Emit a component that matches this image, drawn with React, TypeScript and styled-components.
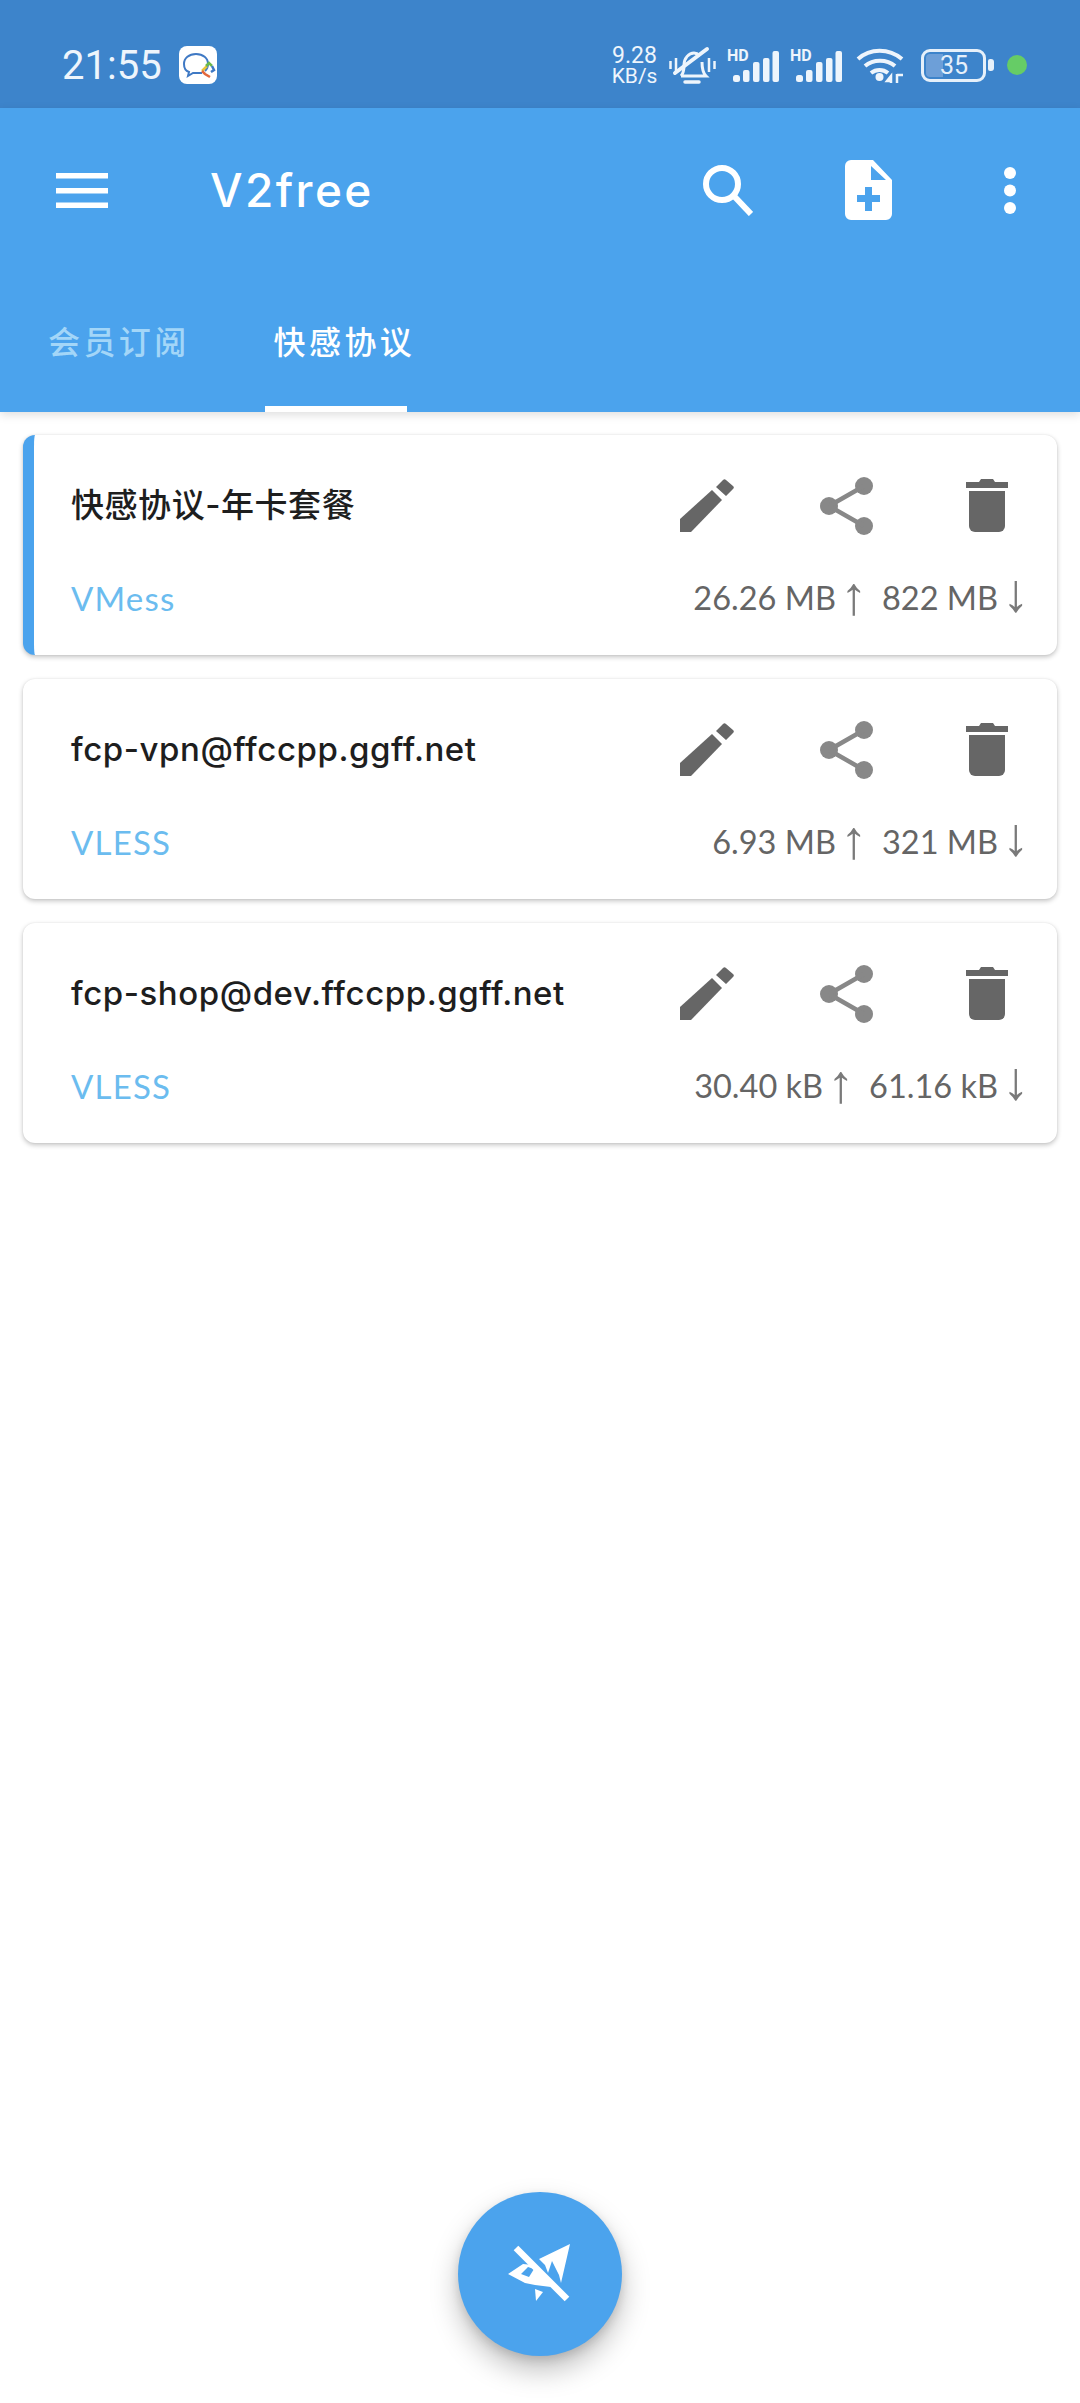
import styled, { createGlobalStyle } from "styled-components";

const GlobalStyle = createGlobalStyle`
  html, body {
    margin: 0;
    padding: 0;
    background: #fff;
  }
  * {
    box-sizing: border-box;
  }
`;

const Page = styled.div`
  position: relative;
  width: 1080px;
  height: 2403px;
  overflow: hidden;
  background: #fff;
  font-family: Lato, "Noto Sans CJK SC", sans-serif;
`;

const StatusBar = styled.div`
  height: 108px;
  background: #3d84cb;
  display: flex;
  align-items: center;
  padding: 22px 53px 0 62px;
  color: #eef5fc;
`;

const Clock = styled.div`
  font-family: Roboto, sans-serif;
  font-size: 40px;
  font-weight: 400;
  width: 117px;
`;

const StatusRight = styled.div`
  margin-left: auto;
  display: flex;
  align-items: center;
`;

const Speed = styled.div`
  font-family: Roboto, sans-serif;
  width: 45px;
  text-align: center;
  white-space: nowrap;
  display: flex;
  flex-direction: column;
  align-items: center;
`;

const SpeedValue = styled.span`
  font-size: 23px;
  line-height: 21px;
`;

const SpeedUnit = styled.span`
  font-size: 21px;
  line-height: 20px;
`;

const BellSlot = styled.div`
  margin-left: 12px;
  display: flex;
`;

const Signal = styled.div`
  position: relative;
  width: 52px;
  height: 34px;
  margin-left: 11px;
  display: flex;
`;

const HdLabel = styled.span`
  position: absolute;
  left: 0;
  top: 0;
  font-family: Roboto, sans-serif;
  font-size: 16px;
  font-weight: 700;
  line-height: 16px;
`;

const WifiSlot = styled.div`
  margin-left: 14px;
  display: flex;
`;

const Battery = styled.div`
  position: relative;
  width: 65px;
  height: 33px;
  margin-left: 17px;
  border: 3px solid #e6f0fa;
  border-radius: 9px;
  padding: 2px;
  display: flex;
`;

const BatteryFill = styled.div`
  width: 17px;
  border-radius: 4px 0 0 4px;
  background: #6d9fd8;
`;

const BatteryText = styled.span`
  position: absolute;
  left: 16px;
  top: -2px;
  font-family: Roboto, sans-serif;
  font-size: 25px;
  line-height: 31px;
  color: #e6f0fa;
`;

const BatteryNub = styled.div`
  width: 6px;
  height: 12px;
  margin-left: 2px;
  border-radius: 2px 3px 3px 2px;
  background: #e6f0fa;
`;

const GreenDot = styled.div`
  width: 20px;
  height: 20px;
  margin-left: 13px;
  border-radius: 50%;
  background: #66cc66;
`;

const AppBar = styled.header`
  position: relative;
  height: 304px;
  background: #4ba3ed;
  box-shadow: 0 3px 9px rgba(0, 0, 0, 0.13);
  display: flex;
  flex-direction: column;
`;

const Toolbar = styled.div`
  height: 164px;
  display: flex;
  align-items: center;
  padding-left: 56px;
`;

const Title = styled.h1`
  margin: 0 0 0 102px;
  font-family: Inter, sans-serif;
  font-size: 46px;
  font-weight: 500;
  line-height: 56px;
  letter-spacing: 2.4px;
  color: #fff;
`;

const ToolbarActions = styled.div`
  margin-left: auto;
  display: flex;
  align-items: center;
`;

const ToolbarSlot = styled.div`
  width: 141px;
  display: flex;
  justify-content: center;
`;

const Tabs = styled.div`
  margin-top: 36px;
  height: 104px;
  display: flex;
  padding-left: 48px;
`;

const Tab = styled.div<{ $active?: boolean }>`
  position: relative;
  font-size: 32px;
  line-height: 40px;
  letter-spacing: 3.4px;
  font-weight: 500;
  padding-top: 14px;
  color: ${(p) => (p.$active ? "#ffffff" : "#a3d6f8")};
  & + & {
    margin-left: 84px;
  }
`;

const TabIndicator = styled.div`
  position: absolute;
  left: -9px;
  bottom: 0;
  width: 142px;
  height: 6px;
  background: #fff;
`;

const List = styled.main`
  padding: 23px 23px 0;
  display: flex;
  flex-direction: column;
  gap: 24px;
`;

const Card = styled.article<{ $selected?: boolean }>`
  height: 220px;
  background: #fff;
  border-radius: 12px;
  overflow: hidden;
  box-shadow: 0 2px 5px rgba(0, 0, 0, 0.24), 0 0 2px rgba(0, 0, 0, 0.07);
  border-left: ${(p) => (p.$selected ? "11px solid #4ba3ed" : "none")};
  padding-left: ${(p) => (p.$selected ? "37px" : "48px")};
  display: flex;
  flex-direction: column;
`;

const CardTop = styled.div`
  height: 142px;
  display: flex;
  align-items: center;
`;

const CardName = styled.div`
  flex: 1;
  margin-bottom: 2px;
  font-family: Inter, "Noto Sans CJK SC", sans-serif;
  font-size: 33px;
  line-height: 42px;
  font-weight: 500;
  letter-spacing: 0.55px;
  color: #1e1e1e;
  white-space: nowrap;
`;

const IconButton = styled.div`
  width: 140px;
  height: 70px;
  flex: none;
  display: flex;
  align-items: center;
  justify-content: center;
`;

const CardBottom = styled.div`
  display: flex;
  align-items: center;
  justify-content: space-between;
  padding-right: 34px;
  margin-top: -1px;
`;

const Protocol = styled.div`
  font-size: 33px;
  line-height: 44px;
  letter-spacing: 1.2px;
  color: #6bbcef;
`;

const Traffic = styled.div`
  display: flex;
  align-items: center;
  font-size: 32.5px;
  line-height: 44px;
  color: #656565;
  white-space: nowrap;
`;

const TrafficArrow = styled.span<{ $last?: boolean }>`
  width: 14px;
  height: 44px;
  margin-left: 11px;
  margin-right: ${(p) => (p.$last ? "0" : "21px")};
  margin-top: ${(p) => (p.$last ? "-12px" : "-6px")};
  display: flex;
  justify-content: center;
  font-family: "Liberation Sans", sans-serif;
  font-size: 54px;
  line-height: 44px;
  color: #7a7a7a;
`;

const Fab = styled.button`
  position: absolute;
  left: 458px;
  top: 2192px;
  width: 164px;
  height: 164px;
  padding: 0;
  border: none;
  border-radius: 50%;
  background: #4ba3ed;
  box-shadow: 0 14px 28px rgba(0, 0, 0, 0.25), 0 4px 10px rgba(0, 0, 0, 0.12);
  display: flex;
  align-items: center;
  justify-content: center;
`;

function MessageIcon() {
  return (
    <svg width="38" height="38" viewBox="0 0 38 38">
      <rect width="38" height="38" rx="8" fill="#fff" />
      <path
        d="M26 25c2-2 3-4 3-7 0-6-5-10-12-10S5 12 5 18c0 4 2 7 5 8l-1 4 5-3h9"
        fill="none"
        stroke="#3f79c4"
        strokeWidth="2"
      />
      <path d="M23 25l5-5" fill="none" stroke="#e9c53b" strokeWidth="2.500" />
      <path d="M27 20l3-3 3 3" fill="none" stroke="#6cb94b" strokeWidth="2.500" />
      <path d="M33 20l2 4-3 2" fill="none" stroke="#3f79c4" strokeWidth="2.500" />
      <path d="M31 31l-5-3-3-3" fill="none" stroke="#e2673c" strokeWidth="2.500" />
    </svg>
  );
}

function MutedBellIcon() {
  return (
    <svg width="47" height="38" viewBox="0 0 47 38" fill="none" stroke="#eef5fc">
      <path d="M12 30c3-3 3-7 3-11 0-7 5-12 10-12 2 0 4 1 6 3" strokeWidth="3" />
      <path d="M33 16c0 6 1 11 4 14H12" strokeWidth="3" />
      <path d="M16 36h14" strokeWidth="3.500" strokeLinecap="round" />
      <path d="M6 27L38 3" strokeWidth="4" strokeLinecap="round" />
      <path d="M1.500 15v8M7 12v14M40 12v14M45.500 15v8" strokeWidth="2.500" />
    </svg>
  );
}

function SignalBars() {
  return (
    <svg width="52" height="34" viewBox="0 0 52 34" fill="#eef5fc">
      <rect x="6" y="27" width="7" height="7" rx="2.500" />
      <rect x="16" y="22" width="6.500" height="12" rx="2" />
      <rect x="26" y="14" width="6.500" height="20" rx="2" />
      <rect x="36" y="10" width="6.500" height="24" rx="2" />
      <rect x="45.500" y="3" width="6.500" height="31" rx="2" />
    </svg>
  );
}

function WifiIcon() {
  return (
    <svg width="48" height="36" viewBox="0 0 48 36" fill="none" stroke="#eef5fc">
      <path d="M2 12C14 1 33 1 46 12" strokeWidth="4" />
      <path d="M9 19c8-7 22-7 30 0" strokeWidth="4" />
      <path d="M15 26c5-4 12-4 17 0" strokeWidth="4" />
      <circle cx="23.500" cy="30" r="4" fill="#eef5fc" stroke="none" />
      <path d="M35 36v-7l-4 5h4zM41 36v-9M41 28h6" strokeWidth="2.500" />
    </svg>
  );
}

function MenuIcon() {
  return (
    <svg width="52" height="35" viewBox="0 0 52 35" fill="#fff">
      <rect y="0" width="52" height="5.500" />
      <rect y="15" width="52" height="5.500" />
      <rect y="29.500" width="52" height="5.500" />
    </svg>
  );
}

function SearchIcon() {
  return (
    <svg width="50" height="51" viewBox="0 0 50 51" fill="none" stroke="#fff">
      <circle cx="19" cy="19" r="16" strokeWidth="6" />
      <path d="M30 30l18 19" strokeWidth="6" />
    </svg>
  );
}

function NoteAddIcon() {
  return (
    <svg width="47" height="60" viewBox="0 0 47 60">
      <path
        fill="#fff"
        fillRule="evenodd"
        d="M6 0H28L47 20V54a6 6 0 0 1-6 6H6a6 6 0 0 1-6-6V6a6 6 0 0 1 6-6ZM26 6V20H41ZM20 27H27V35H35V42H27V51H20V42H12V35H20Z"
      />
    </svg>
  );
}

function MoreIcon() {
  return (
    <svg width="12" height="47" viewBox="0 0 12 47" fill="#fff">
      <circle cx="6" cy="6" r="6" />
      <circle cx="6" cy="23.500" r="6" />
      <circle cx="6" cy="41" r="6" />
    </svg>
  );
}

function EditIcon() {
  return (
    <svg width="54" height="54" viewBox="0 0 54 54" fill="#666">
      <path d="M0 40L32 11 42 21 11 53H0Z" />
      <path d="M36 8L43 1a2 2 0 0 1 3 0l7 6a2 2 0 0 1 0 3L46 17Z" />
    </svg>
  );
}

function ShareIcon() {
  return (
    <svg width="54" height="60" viewBox="0 0 54 60" fill="#888">
      <circle cx="44" cy="10" r="9" />
      <circle cx="9" cy="30" r="9" />
      <circle cx="44" cy="50" r="9" />
      <path d="M9 30L44 10M9 30l35 20" stroke="#888" strokeWidth="4.500" />
    </svg>
  );
}

function DeleteIcon() {
  return (
    <svg width="42" height="54" viewBox="0 0 42 54" fill="#666">
      <path d="M0 3H13L15 0H27L29 3H42V9H0Z" />
      <path d="M3 12H39V47a6 6 0 0 1-6 6H9a6 6 0 0 1-6-6Z" />
    </svg>
  );
}

function PlaneOffIcon() {
  return (
    <svg width="66" height="66" viewBox="0 0 66 66" fill="#fff">
      <path d="M63 3L32 18 38 24 41 32 45 20 52 34 54 42Z" />
      <path d="M1 33L16 23 26 24 44 46 28 44 18 42ZM14 33L22 36 27 28 21 26Z" fillRule="evenodd" />
      <path d="M28 48L36 51 29 60Z" />
      <path d="M9 7L60 58" stroke="#fff" strokeWidth="6.500" />
    </svg>
  );
}

const servers = [
  {
    name: "快感协议-年卡套餐",
    protocol: "VMess",
    up: "26.26 MB",
    down: "822 MB",
    selected: true,
  },
  {
    name: "fcp-vpn@ffccpp.ggff.net",
    protocol: "VLESS",
    up: "6.93 MB",
    down: "321 MB",
  },
  {
    name: "fcp-shop@dev.ffccpp.ggff.net",
    protocol: "VLESS",
    up: "30.40 kB",
    down: "61.16 kB",
  },
];

export default function App() {
  return (
    <Page>
      <GlobalStyle />
      <StatusBar>
        <Clock>21:55</Clock>
        <MessageIcon />
        <StatusRight>
          <Speed>
            <SpeedValue>9.28</SpeedValue>
            <SpeedUnit>KB/s</SpeedUnit>
          </Speed>
          <BellSlot>
            <MutedBellIcon />
          </BellSlot>
          <Signal>
            <HdLabel>HD</HdLabel>
            <SignalBars />
          </Signal>
          <Signal>
            <HdLabel>HD</HdLabel>
            <SignalBars />
          </Signal>
          <WifiSlot>
            <WifiIcon />
          </WifiSlot>
          <Battery>
            <BatteryFill />
            <BatteryText>35</BatteryText>
          </Battery>
          <BatteryNub />
          <GreenDot />
        </StatusRight>
      </StatusBar>

      <AppBar>
        <Toolbar>
          <MenuIcon />
          <Title>V2free</Title>
          <ToolbarActions>
            <ToolbarSlot>
              <SearchIcon />
            </ToolbarSlot>
            <ToolbarSlot>
              <NoteAddIcon />
            </ToolbarSlot>
            <ToolbarSlot>
              <MoreIcon />
            </ToolbarSlot>
          </ToolbarActions>
        </Toolbar>
        <Tabs>
          <Tab>会员订阅</Tab>
          <Tab $active>
            快感协议
            <TabIndicator />
          </Tab>
        </Tabs>
      </AppBar>

      <List>
        {servers.map((server) => (
          <Card key={server.name} $selected={server.selected}>
            <CardTop>
              <CardName>{server.name}</CardName>
              <IconButton>
                <EditIcon />
              </IconButton>
              <IconButton>
                <ShareIcon />
              </IconButton>
              <IconButton>
                <DeleteIcon />
              </IconButton>
            </CardTop>
            <CardBottom>
              <Protocol>{server.protocol}</Protocol>
              <Traffic>
                {server.up}
                <TrafficArrow>↑</TrafficArrow>
                {server.down}
                <TrafficArrow $last>↓</TrafficArrow>
              </Traffic>
            </CardBottom>
          </Card>
        ))}
      </List>

      <Fab>
        <PlaneOffIcon />
      </Fab>
    </Page>
  );
}
